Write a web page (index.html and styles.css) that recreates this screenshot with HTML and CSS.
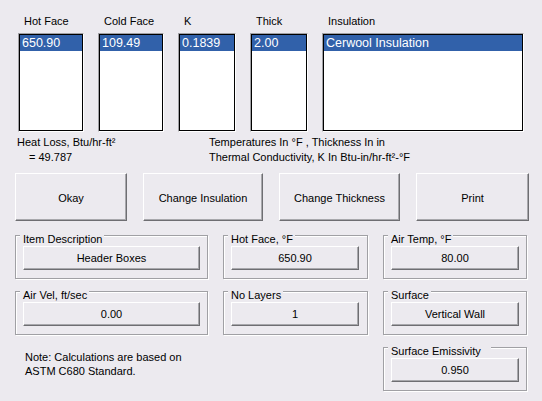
FILE: index.html
```html
<!DOCTYPE html>
<html>
<head>
<meta charset="utf-8">
<link rel="stylesheet" href="styles.css">
</head>
<body>
<div class="window">
  <div class="lists">
    <div class="col">
      <div class="col-label">Hot Face</div>
      <div class="listbox w66"><div class="listbox-inner"><div class="item sel">650.90</div></div></div>
    </div>
    <div class="col">
      <div class="col-label">Cold Face</div>
      <div class="listbox w66"><div class="listbox-inner"><div class="item sel">109.49</div></div></div>
    </div>
    <div class="col">
      <div class="col-label">K</div>
      <div class="listbox w58"><div class="listbox-inner"><div class="item sel">0.1839</div></div></div>
    </div>
    <div class="col">
      <div class="col-label">Thick</div>
      <div class="listbox w58"><div class="listbox-inner"><div class="item sel">2.00</div></div></div>
    </div>
    <div class="col">
      <div class="col-label">Insulation</div>
      <div class="listbox w202"><div class="listbox-inner"><div class="item sel">Cerwool Insulation</div></div></div>
    </div>
  </div>

  <div class="info">
    <div class="info-left">
      <div>Heat Loss, Btu/hr-ft²</div>
      <div class="indent">= 49.787</div>
    </div>
    <div class="info-right">
      <div>Temperatures In °F , Thickness In in</div>
      <div>Thermal Conductivity, K In Btu-in/hr-ft²-°F</div>
    </div>
  </div>

  <div class="actions">
    <div class="btn big b1">Okay</div>
    <div class="btn big b2">Change Insulation</div>
    <div class="btn big b3">Change Thickness</div>
    <div class="btn big b4">Print</div>
  </div>

  <div class="groups">
    <div class="group gl">
      <div class="legend">Item Description</div>
      <div class="btn field">Header Boxes</div>
    </div>
    <div class="group gm">
      <div class="legend">Hot Face, °F</div>
      <div class="btn field">650.90</div>
    </div>
    <div class="group gr">
      <div class="legend">Air Temp, °F</div>
      <div class="btn field">80.00</div>
    </div>

    <div class="group gl">
      <div class="legend">Air Vel, ft/sec</div>
      <div class="btn field">0.00</div>
    </div>
    <div class="group gm">
      <div class="legend">No Layers</div>
      <div class="btn field">1</div>
    </div>
    <div class="group gr">
      <div class="legend">Surface</div>
      <div class="btn field">Vertical Wall</div>
    </div>

    <div class="note">
      <div>Note: Calculations are based on</div>
      <div>ASTM C680 Standard.</div>
    </div>
    <div class="empty"></div>
    <div class="group gr">
      <div class="legend wide">Surface Emissivity</div>
      <div class="btn field">0.950</div>
    </div>
  </div>
</div>
</body>
</html>
```

FILE: styles.css
```css
html, body {
  margin: 0;
  padding: 0;
}
body {
  width: 542px;
  height: 401px;
  overflow: hidden;
  background: #eceaef;
  font-family: "Liberation Sans", Arial, sans-serif;
  font-size: 11px;
  line-height: 13px;
  color: #000;
}
.window {
  width: 542px;
  height: 401px;
}

/* list boxes */
.lists {
  display: flex;
  gap: 14px;
  padding: 15px 0 0 18px;
}
.col {
  display: flex;
  flex-direction: column;
}
.col-label {
  padding-left: 6px;
  height: 13px;
  margin-bottom: 5px;
}
.listbox {
  height: 99px;
  box-sizing: border-box;
  border: 1px solid;
  border-color: #a0a0a4 #ffffff #ffffff #a0a0a4;
}
.listbox-inner {
  height: 100%;
  box-sizing: border-box;
  border: 1px solid #000;
  background: #fff;
}
.w66 { width: 66px; }
.w58 { width: 58px; }
.w202 { width: 202px; }
.item {
  height: 16px;
  line-height: 16px;
  font-size: 12.5px;
  padding-left: 2px;
  white-space: nowrap;
}
.item.sel {
  background: #3161aa;
  color: #fff;
}

/* info text */
.info {
  display: flex;
  margin-top: 3px;
  padding-left: 17px;
  line-height: 15px;
}
.info-left {
  width: 192px;
}
.indent {
  padding-left: 12px;
}

/* buttons */
.btn {
  box-sizing: border-box;
  display: flex;
  align-items: center;
  justify-content: center;
  border: 1px solid;
  border-color: #ffffff #6e6e72 #6e6e72 #ffffff;
  box-shadow: inset -1px -1px 0 #a8a8ac;
  background: #eceaef;
  white-space: nowrap;
}
.actions {
  display: flex;
  gap: 16px;
  margin-top: 8px;
  padding-left: 15px;
}
.big {
  height: 48px;
  padding-top: 3px;
}
.b1 { width: 112px; }
.b2 { width: 120px; }
.b3 { width: 121px; }
.b4 { width: 113px; }

/* group boxes */
.groups {
  display: grid;
  grid-template-columns: 193px 145px 144px;
  grid-auto-rows: 44px;
  column-gap: 15px;
  row-gap: 12px;
  margin-top: 14px;
  padding-left: 15px;
}
.group {
  box-sizing: border-box;
  border: 1px solid #a0a0a4;
  box-shadow: 1px 1px 0 #ffffff, inset 1px 1px 0 #ffffff;
  padding: 0 7px 7px 7px;
  display: flex;
  flex-direction: column;
}
.gm {
  padding-right: 8px;
}
.legend {
  align-self: flex-start;
  margin: -3px 0 0 -3px;
  padding: 0 2px 0 3px;
  height: 13px;
  background: #eceaef;
  white-space: nowrap;
}
.legend.wide {
  padding-right: 10px;
}
.field {
  height: 24px;
}
.note {
  padding: 4px 0 0 10px;
  line-height: 13.5px;
}
```
